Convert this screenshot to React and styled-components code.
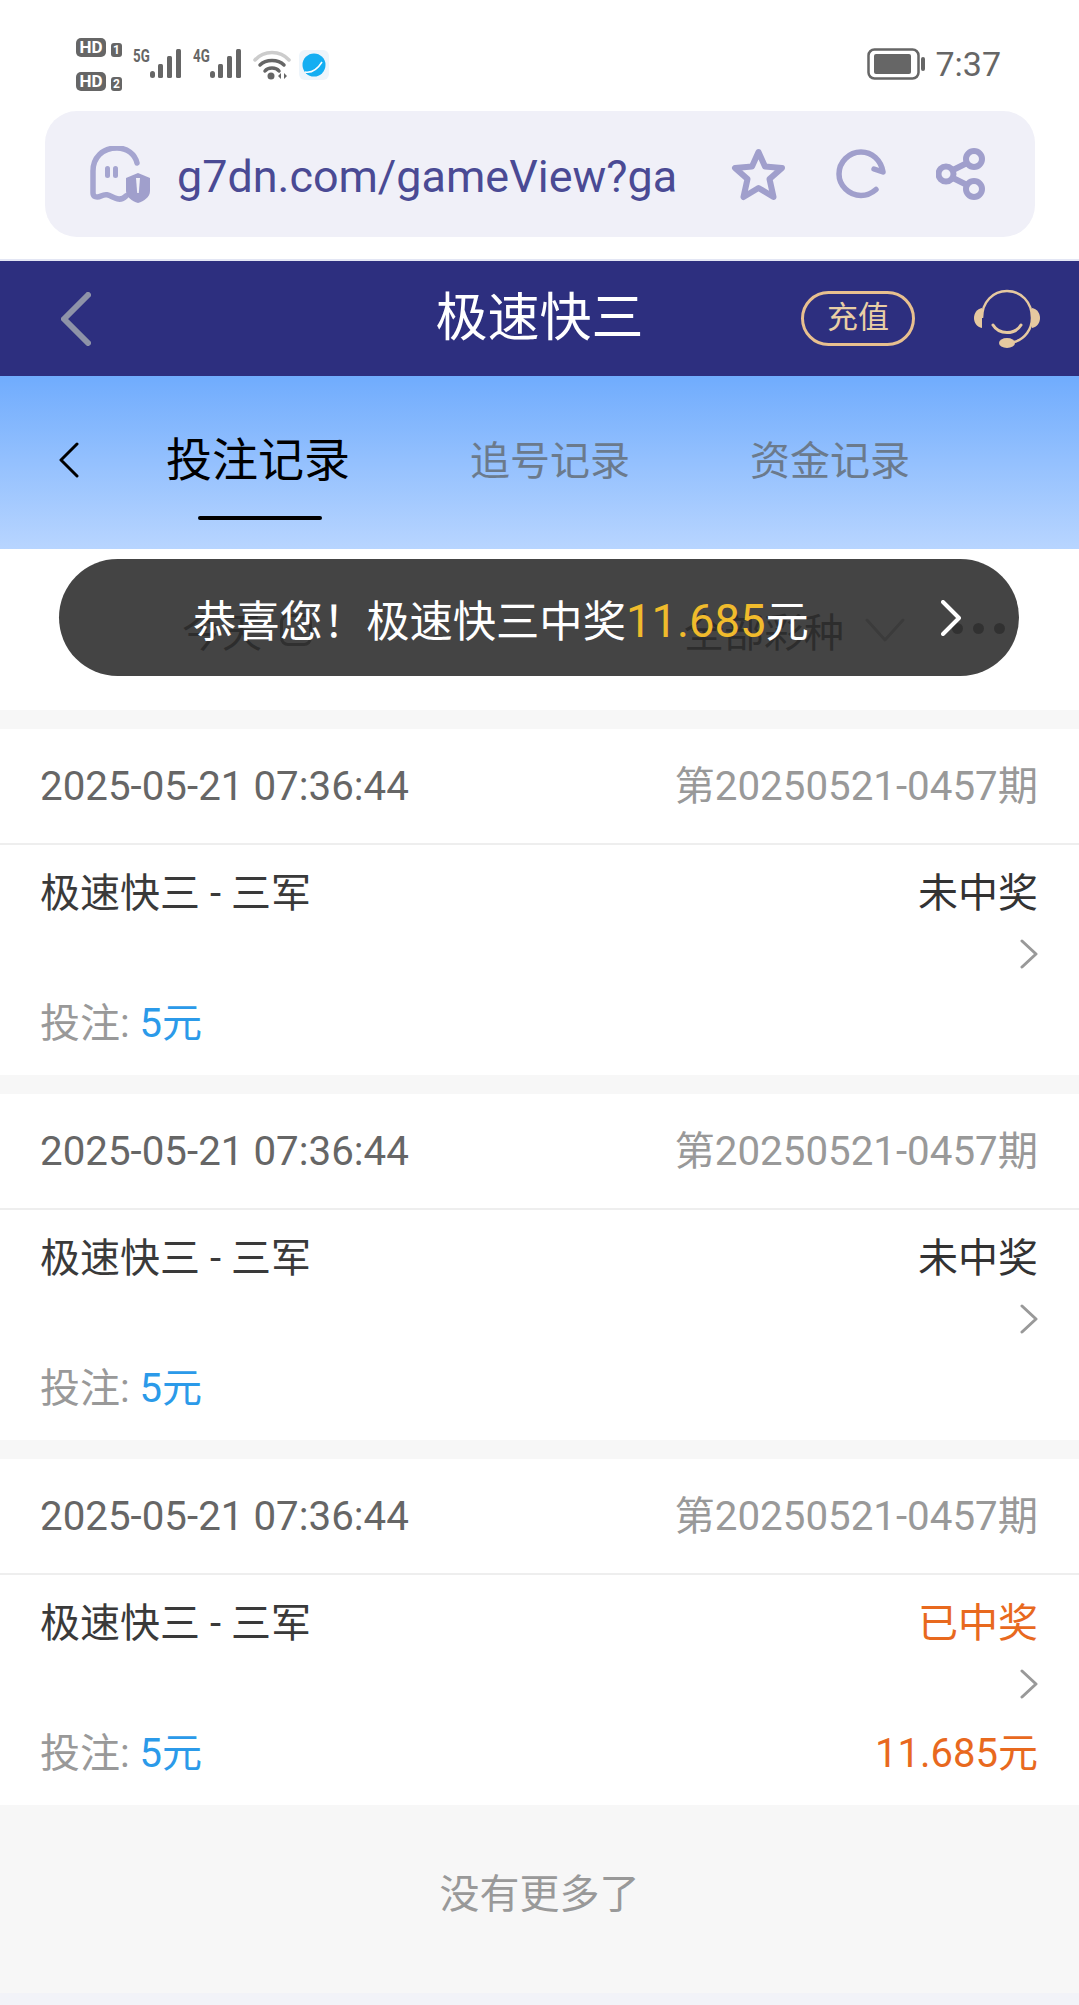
import React from 'react'
import styled, { createGlobalStyle } from 'styled-components'

const GlobalStyle = createGlobalStyle`
    html, body {
        margin: 0;
        padding: 0;
        background: #fff;
        font-family: Roboto, "Noto Sans CJK SC", sans-serif;
    }
    * {
        box-sizing: border-box;
    }
`

const Page = styled.div`
    width: 1079px;
    height: 2005px;
    overflow: hidden;
    display: flex;
    flex-direction: column;
    background: #f7f7f7;
`

/* status bar */
const StatusBar = styled.div`
    height: 111px;
    flex: none;
    background: #fff;
    display: flex;
    align-items: flex-start;
    padding: 38px 78px 0 76px;
    color: #666;
`
const SimColumn = styled.div`
    display: flex;
    flex-direction: column;
    gap: 15px;
    width: 57px;
`
const SimRow = styled.div`
    display: flex;
    align-items: flex-end;
    gap: 5px;
`
const HdBadge = styled.span`
    width: 30px;
    height: 19px;
    border-radius: 5px;
    background: #666;
    color: #fff;
    font-size: 17px;
    font-weight: 700;
    line-height: 19px;
    text-align: center;
`
const SimBadge = styled.span`
    width: 11px;
    height: 14px;
    border-radius: 3px;
    background: #666;
    color: #fff;
    font-size: 12px;
    font-weight: 700;
    line-height: 14px;
    text-align: center;
`
const Signal = styled.div`
    display: flex;
    align-items: flex-start;
    width: 60px;
    margin-top: 11px;
`
const NetLabel = styled.span`
    font-size: 19px;
    font-weight: 700;
    line-height: 14px;
    width: 17px;
    transform: scaleX(0.7);
    transform-origin: left;
`
const StatusGroup = styled.div`
    display: flex;
    align-items: center;
    gap: 8px;
    margin-top: 11px;
`
const AppIcon = styled.div`
    width: 30px;
    height: 30px;
    border-radius: 6px;
    background: #eef5fb;
    display: flex;
    align-items: center;
    justify-content: center;
`
const StatusRight = styled.div`
    margin-left: auto;
    margin-top: 10px;
    display: flex;
    align-items: center;
    gap: 10px;
`
const Clock = styled.span`
    font-size: 34px;
    line-height: 32px;
    color: #666;
`

/* address bar */
const AddressWrap = styled.div`
    height: 150px;
    flex: none;
    background: #fff;
    padding: 0 44px 0 45px;
    border-bottom: 2px solid #e3e6f4;
`
const AddressBar = styled.div`
    height: 126px;
    border-radius: 32px;
    background: #f0f0f8;
    display: flex;
    align-items: center;
    padding-left: 45px;
`
const UrlText = styled.span`
    font-size: 44.9px;
    color: #4a4a94;
    margin: 5px 0 0 27px;
    width: 554px;
    white-space: nowrap;
`
const AddressIcons = styled.div`
    display: flex;
    align-items: center;
    gap: 50px;
`

/* game header */
const GameHeader = styled.div`
    height: 115px;
    flex: none;
    background: #2d2f7f;
    display: flex;
    align-items: center;
    padding: 0 39px 0 61px;
    position: relative;
`
const GameTitle = styled.div`
    position: absolute;
    left: 0;
    right: 0;
    text-align: center;
    color: #fff;
    font-size: 52px;
    line-height: 60px;
`
const RechargePill = styled.div`
    margin-left: auto;
    width: 114px;
    height: 55px;
    border: 3px solid #e8c08f;
    border-radius: 28px;
    color: #e9cfa5;
    font-size: 31px;
    line-height: 48px;
    text-align: center;
    margin-right: 59px;
`

/* tabs */
const TabBar = styled.div`
    height: 173px;
    flex: none;
    background: linear-gradient(180deg, #70acfd 0%, #b8d5ff 100%);
    display: flex;
    align-items: center;
    padding: 0 0 5px 59px;
`
const TabList = styled.div`
    display: flex;
    align-items: center;
    gap: 120px;
    margin-left: 87px;
`
const Tab = styled.div`
    position: relative;
    font-size: ${p => (p.$active ? '46px' : '40px')};
    line-height: 60px;
    margin-top: ${p => (p.$active ? '0' : '4px')};
    color: ${p => (p.$active ? '#000' : '#6b7a8c')};
    &::after {
        content: ${p => (p.$active ? '""' : 'none')};
        position: absolute;
        left: 32px;
        bottom: -30px;
        width: 124px;
        height: 4px;
        border-radius: 2px;
        background: #000;
    }
`

/* filter row with the toast lying over it */
const FilterRow = styled.div`
    height: 161px;
    flex: none;
    background: #fff;
    position: relative;
    display: flex;
    align-items: center;
    padding: 0 0 0 182px;
    color: #000;
    font-size: 40px;
`
const FilterItem = styled.div`
    display: flex;
    align-items: center;
    gap: ${p => p.$gap}px;
    margin-right: ${p => p.$after}px;
`
const CalendarBox = styled.span`
    width: 32px;
    height: 32px;
    border: 3px solid #222;
    border-radius: 8px;
`
const Dots = styled.div`
    display: flex;
    gap: 10px;
    margin-bottom: 2px;
`
const Dot = styled.span`
    width: 11px;
    height: 11px;
    border-radius: 50%;
    background: #333;
`
const Toast = styled.div`
    position: absolute;
    left: 59px;
    top: 10px;
    width: 960px;
    height: 117px;
    border-radius: 59px;
    background: rgba(50, 50, 50, 0.91);
    display: flex;
    align-items: center;
    justify-content: space-between;
    padding: 0 58px 0 134px;
    color: #fff;
    font-size: 43.3px;
`
const Prize = styled.span`
    color: #f0bb2c;
    font-size: 45.4px;
`

/* record cards */
const RecordList = styled.div`
    display: flex;
    flex-direction: column;
    gap: 19px;
    padding-top: 19px;
`
const Card = styled.div`
    height: 346px;
    background: #fff;
    display: flex;
    flex-direction: column;
`
const CardHead = styled.div`
    height: 116px;
    flex: none;
    border-bottom: 2px solid #eee;
    display: flex;
    align-items: baseline;
    justify-content: space-between;
    padding: 28px 41px 0 40px;
    font-size: 40.3px;
    line-height: 60px;
`
const Time = styled.span`
    color: #666;
`
const Issue = styled.span`
    color: #999;
`
const CardBody = styled.div`
    flex: 1;
    display: flex;
    flex-direction: column;
    padding: 15px 41px 21px 40px;
`
const BodyRow = styled.div`
    display: flex;
    align-items: center;
    justify-content: ${p => (p.$end ? 'flex-end' : 'space-between')};
    height: ${p => p.$h}px;
    padding-bottom: ${p => (p.$end ? '3px' : '0')};
    font-size: 40px;
    color: #3a3a3a;
`
const Result = styled.span`
    color: ${p => (p.$won ? '#e8691e' : '#333')};
`
const Stake = styled.span`
    color: #999;
`
const Amount = styled.span`
    color: #2b9ae9;
`

/* footer */
const NoMore = styled.div`
    flex: 1;
    display: flex;
    align-items: center;
    justify-content: center;
    background: #f7f7f7;
    border-bottom: 12px solid #f2f3f8;
    padding-bottom: 16px;
    font-size: 40px;
    color: #999;
`

const SignalBars = () => (
    <svg width="34" height="30" viewBox="0 0 34 30" fill="#666">
        <rect x="0" y="22" width="5" height="7" rx="2.5" />
        <rect x="8" y="15" width="5" height="14" rx="1.5" />
        <rect x="17" y="7" width="5" height="22" rx="1.5" />
        <rect x="26" y="0" width="5" height="29" rx="1.5" />
    </svg>
)

const WifiIcon = () => (
    <svg width="38" height="31" viewBox="0 0 38 31" fill="none" strokeLinecap="round">
        <path d="M2 11C11 1 27 1 36 11" stroke="#ccc" strokeWidth="3.5" />
        <path d="M7 16C13 10 25 10 31 16" stroke="#666" strokeWidth="3.5" />
        <path d="M12 22C15 18 23 18 26 22" stroke="#666" strokeWidth="3.5" />
        <circle cx="18" cy="27" r="3.5" fill="#666" />
        <path d="M28 24v6l-3-3zM31 24v6l3-3z" fill="#666" />
    </svg>
)

const BrowserLogo = () => (
    <svg width="24" height="24" viewBox="0 0 24 24">
        <circle cx="12" cy="12" r="11.5" fill="#14aef2" />
        <path d="M3 19c6 1 12-2 17-10" stroke="#fff" strokeWidth="1.5" fill="none" />
    </svg>
)

const Battery = () => (
    <svg width="58" height="32" viewBox="0 0 58 32" fill="none">
        <rect x="1.5" y="1.5" width="50" height="29" rx="6" stroke="#666" strokeWidth="2.5" />
        <rect x="7" y="6" width="37" height="20" rx="2" fill="#666" />
        <rect x="54" y="9" width="4" height="14" rx="2" fill="#666" />
    </svg>
)

const GhostIcon = () => (
    <svg width="60" height="57" viewBox="0 0 60 57" fill="none">
        <path
            d="M47 17C45 8 37 2 27 2C12 2 3 12 3 25V47C3 51 7 52 11 50C17 47 20 50 25 52C29 54 33 53 36 50"
            stroke="#a5a5d0"
            strokeWidth="5.5"
            strokeLinecap="round"
        />
        <rect x="15" y="20" width="5" height="12" rx="2.5" fill="#a5a5d0" />
        <rect x="23" y="20" width="5" height="12" rx="2.5" fill="#a5a5d0" />
        <path d="M48 27L60 32V45C60 51 54 55 48 57C42 55 36 51 36 45V32Z" fill="#a09fcc" />
        <path d="M46 32H50L48.8 47H47.2Z" fill="#f0f0f8" />
    </svg>
)

const StarIcon = () => (
    <svg width="55" height="53" viewBox="0 0 55 53" fill="none">
        <path
            d="M27.5 4L34 18.5L51 20L38.5 31L42.5 49L27.5 40L12.5 49L16.5 31L4 20L21 18.5Z"
            stroke="#a09fcc"
            strokeWidth="6"
            strokeLinejoin="round"
        />
    </svg>
)

const ReloadIcon = () => (
    <svg width="50" height="50" viewBox="0 0 50 50" fill="none">
        <path
            d="M40 40.5C36 44 31 46.5 25 46.5C13 46.5 3 36.5 3 25C3 13 13 3 25 3C36 3 45 11 47 23L38 20"
            stroke="#a09fcc"
            strokeWidth="5.5"
            strokeLinecap="round"
            strokeLinejoin="round"
        />
    </svg>
)

const ShareIcon = () => (
    <svg width="50" height="52" viewBox="0 0 50 52" fill="none" stroke="#a09fcc" strokeWidth="6">
        <circle cx="10" cy="26" r="7.5" />
        <circle cx="38" cy="11" r="8" />
        <circle cx="38" cy="41" r="8" />
        <path d="M17 22L31 15M17 30L31 37" />
    </svg>
)

const BackIcon = () => (
    <svg width="30" height="54" viewBox="0 0 30 54" fill="none">
        <path d="M27 3L3 27L27 51" stroke="#8e93a8" strokeWidth="6" strokeLinecap="round" strokeLinejoin="round" />
    </svg>
)

const HeadsetIcon = () => (
    <svg width="66" height="60" viewBox="0 0 66 60" fill="none">
        <path d="M8 29C8 13 19 2 33 2C47 2 58 13 58 29C58 40 51 50 40 53" stroke="#e6c9a0" strokeWidth="2.5" />
        <path d="M8 19C3 20 0 24 0 29C0 34 3 38 8 39Z" fill="#e6c9a0" />
        <path d="M58 19C63 20 66 24 66 29C66 34 63 38 58 39Z" fill="#e6c9a0" />
        <path d="M19 36C25 46 41 46 47 36" stroke="#e6c9a0" strokeWidth="3" strokeLinecap="round" />
        <ellipse cx="33" cy="54" rx="8" ry="5" fill="#e6c9a0" />
    </svg>
)

const Chevron = ({ dir = 'right', w, h, color, stroke }) => (
    <svg width={w} height={h} viewBox={`0 0 ${w} ${h}`} fill="none">
        <path
            d={
                dir === 'right'
                    ? `M2 2L${w - 2} ${h / 2}L2 ${h - 2}`
                    : dir === 'left'
                        ? `M${w - 2} 2L2 ${h / 2}L${w - 2} ${h - 2}`
                        : `M2 2L${w / 2} ${h - 2}L${w - 2} 2`
            }
            stroke={color}
            strokeWidth={stroke}
            strokeLinecap="round"
            strokeLinejoin="round"
        />
    </svg>
)

const records = [
    { id: 1, status: '未中奖', won: false },
    { id: 2, status: '未中奖', won: false },
    { id: 3, status: '已中奖', won: true, prize: '11.685元' }
]

export default function App() {
    return (
        <Page>
            <GlobalStyle />
            <StatusBar>
                <SimColumn>
                    <SimRow>
                        <HdBadge>HD</HdBadge>
                        <SimBadge>1</SimBadge>
                    </SimRow>
                    <SimRow>
                        <HdBadge>HD</HdBadge>
                        <SimBadge>2</SimBadge>
                    </SimRow>
                </SimColumn>
                <Signal>
                    <NetLabel>5G</NetLabel>
                    <SignalBars />
                </Signal>
                <Signal>
                    <NetLabel>4G</NetLabel>
                    <SignalBars />
                </Signal>
                <StatusGroup>
                    <WifiIcon />
                    <AppIcon>
                        <BrowserLogo />
                    </AppIcon>
                </StatusGroup>
                <StatusRight>
                    <Battery />
                    <Clock>7:37</Clock>
                </StatusRight>
            </StatusBar>

            <AddressWrap>
                <AddressBar>
                    <GhostIcon />
                    <UrlText>g7dn.com/gameView?ga</UrlText>
                    <AddressIcons>
                        <StarIcon />
                        <ReloadIcon />
                        <ShareIcon />
                    </AddressIcons>
                </AddressBar>
            </AddressWrap>

            <GameHeader>
                <BackIcon />
                <GameTitle>极速快三</GameTitle>
                <RechargePill>充值</RechargePill>
                <HeadsetIcon />
            </GameHeader>

            <TabBar>
                <Chevron dir="left" w={20} h={36} color="#000" stroke={3} />
                <TabList>
                    <Tab $active>投注记录</Tab>
                    <Tab>追号记录</Tab>
                    <Tab>资金记录</Tab>
                </TabList>
            </TabBar>

            <FilterRow>
                <FilterItem $gap={18} $after={372}>
                    今天
                    <CalendarBox />
                </FilterItem>
                <FilterItem $gap={21} $after={47}>
                    全部彩种
                    <Chevron dir="down" w={40} h={24} color="#999" stroke={3} />
                </FilterItem>
                <Dots>
                    <Dot />
                    <Dot />
                    <Dot />
                </Dots>
                <Toast>
                    <span>
                        恭喜您！极速快三中奖<Prize>11.685</Prize>元
                    </span>
                    <Chevron w={20} h={36} color="#fff" stroke={4} />
                </Toast>
            </FilterRow>

            <RecordList>
                {records.map(record => (
                    <Card key={record.id}>
                        <CardHead>
                            <Time>2025-05-21 07:36:44</Time>
                            <Issue>第20250521-0457期</Issue>
                        </CardHead>
                        <CardBody>
                            <BodyRow $h={60}>
                                极速快三 - 三军
                                <Result $won={record.won}>{record.status}</Result>
                            </BodyRow>
                            <BodyRow $h={70} $end>
                                <Chevron w={18} h={30} color="#999" stroke={3} />
                            </BodyRow>
                            <BodyRow $h={60}>
                                <span>
                                    <Stake>投注: </Stake>
                                    <Amount>5元</Amount>
                                </span>
                                {record.prize && <Result $won>{record.prize}</Result>}
                            </BodyRow>
                        </CardBody>
                    </Card>
                ))}
            </RecordList>

            <NoMore>没有更多了</NoMore>
        </Page>
    )
}
